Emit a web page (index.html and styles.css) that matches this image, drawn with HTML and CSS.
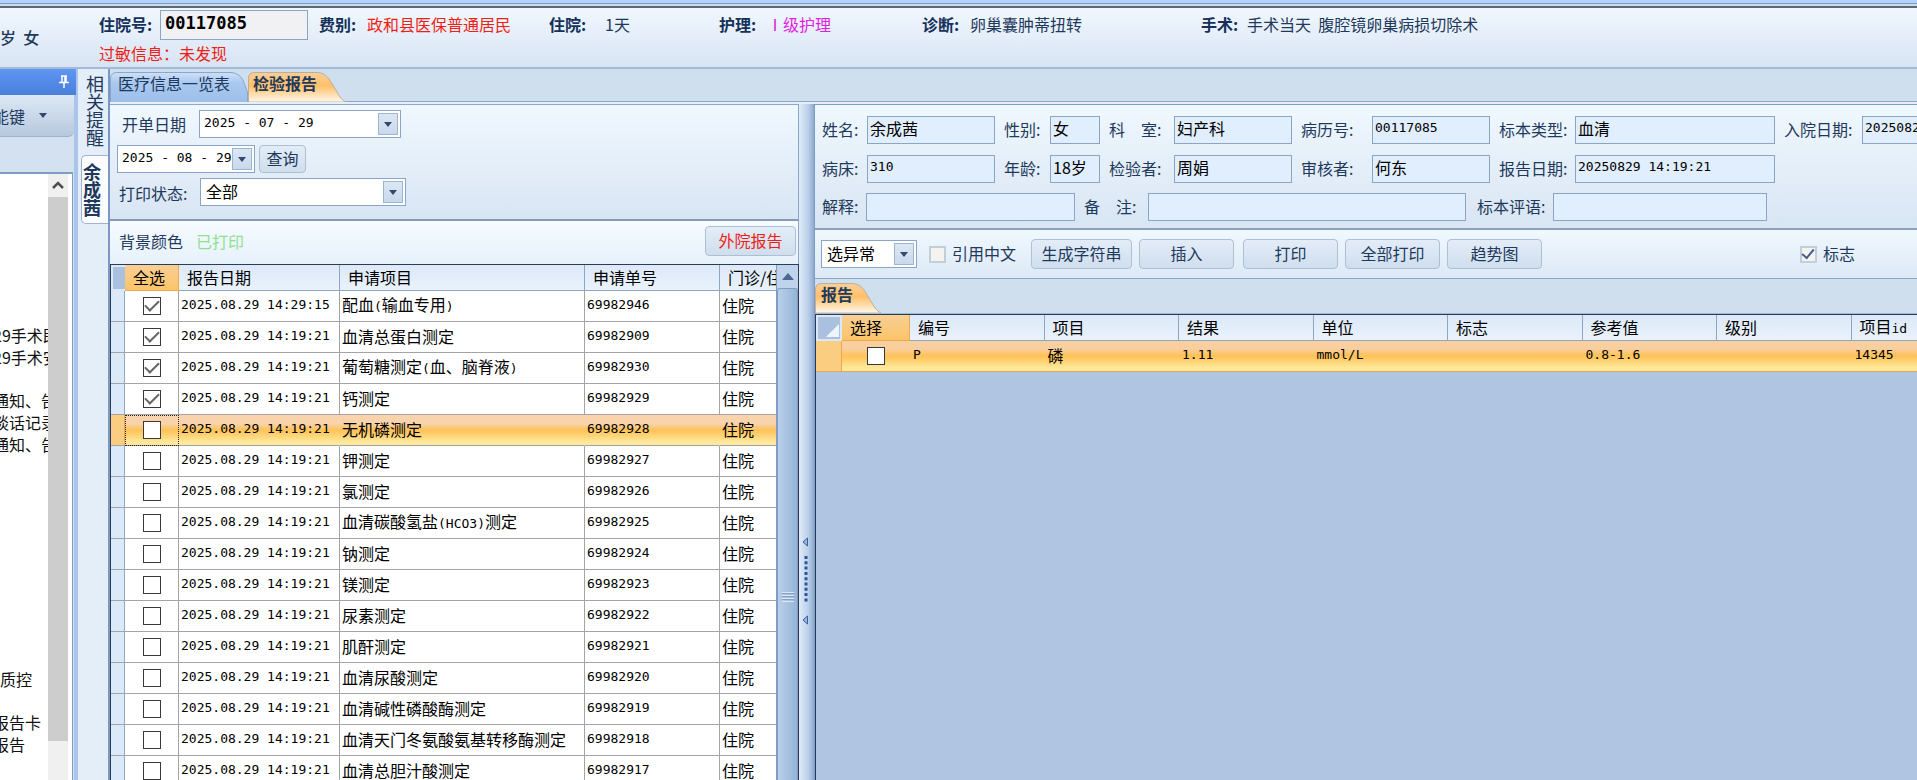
FILE: index.html
```html
<!DOCTYPE html>
<html lang="zh-CN">
<head>
<meta charset="utf-8">
<title>检验报告</title>
<link rel="stylesheet" href="styles.css">
</head>
<body>
<div class="window-edge"></div>
<header class="patient">
  <div class="patient-basic">岁&nbsp; 女</div>
  <div class="patient-info">
    <div class="patient-row">
      <div class="fact fact-id"><label for="admission">住院号:</label><input id="admission" type="text" value="00117085"></div>
      <div class="fact fact-fee"><b>费别:</b><span class="red">政和县医保普通居民</span></div>
      <div class="fact fact-stay"><b>住院:</b><span class="days">1天</span></div>
      <div class="fact fact-care"><b>护理:</b><span class="magenta">Ⅰ级护理</span></div>
      <div class="fact fact-diagnosis"><b>诊断:</b><span>卵巢囊肿蒂扭转</span></div>
      <div class="fact fact-surgery"><b>手术:</b><span>手术当天&nbsp; 腹腔镜卵巢病损切除术</span></div>
    </div>
    <div class="allergy">过敏信息：未发现</div>
  </div>
</header>

<div class="workspace">
  <aside class="side">
    <div class="side-title">
      <svg class="pin" viewBox="0 0 10 13"><path d="M2 1h6M3 1v6M7 1v6M6 1v6M0 7.500h10M5 8v5" fill="none" stroke="#fff" stroke-width="1.500"/></svg>
    </div>
    <div class="side-tools"><button type="button">能键</button><svg class="caret" viewBox="0 0 8 5"><path d="M0 0h8L4 5z"/></svg></div>
    <div class="side-strip"></div>
    <div class="tree">
      <ul>
        <li>29手术即</li>
        <li>29手术安</li>
        <li class="blank"></li>
        <li>通知、告</li>
        <li>谈话记录</li>
        <li>通知、告</li>
        <li class="space"></li>
        <li class="flush">质控</li>
        <li class="blank"></li>
        <li>报告卡</li>
        <li>报告</li>
      </ul>
      <div class="tree-scroll">
        <button type="button" aria-label="向上"><svg viewBox="0 0 12 9"><path d="M1 7l5-5 5 5" fill="none" stroke="#505050" stroke-width="2.500"/></svg></button>
        <div class="tree-thumb"></div>
      </div>
    </div>
  </aside>

  <nav class="vtabs">
    <button type="button" class="vtab">相关提醒</button>
    <button type="button" class="vtab vtab-on">余成茜</button>
  </nav>

  <main class="main">
    <div class="tabs">
      <button type="button" class="tab tab-list">
        <svg viewBox="0 0 138 30" preserveAspectRatio="none"><defs><linearGradient id="blue" x1="0" y1="0" x2="0" y2="1"><stop offset="0" stop-color="#cfe0f6"/><stop offset=".35" stop-color="#a9c8f0"/><stop offset="1" stop-color="#9dbfe9"/></linearGradient></defs><path d="M.5 30V7Q.5.5 7 .5H121Q129 1 133 8L137.500 20V30" fill="url(#blue)" stroke="#8aa6cd"/></svg>
        <span>医疗信息一览表</span>
      </button>
      <button type="button" class="tab tab-lab">
        <svg viewBox="0 0 98 30" preserveAspectRatio="none"><defs><linearGradient id="orange" x1="0" y1="0" x2="0" y2="1"><stop offset="0" stop-color="#f9cf9a"/><stop offset=".45" stop-color="#ffc069"/><stop offset="1" stop-color="#fff8ec"/></linearGradient></defs><path d="M.5 30V6Q.5.500 7 .500H70Q78 1 83 10L92 25Q95 29 98 30z" fill="url(#orange)" stroke="#b5a58f" stroke-width=".8"/></svg>
        <span>检验报告</span>
      </button>
    </div>

    <div class="panes">
      <section class="orders">
        <form class="filters">
          <div class="filter-row filter-from">
            <label for="from">开单日期</label>
            <div class="combo combo-from"><input id="from" type="text" value="2025 - 07 - 29"><button type="button" aria-label="选择日期"><svg class="caret" viewBox="0 0 8 5"><path d="M0 0h8L4 5z"/></svg></button></div>
          </div>
          <div class="filter-row filter-to">
            <div class="combo combo-to"><input type="text" aria-label="结束日期" value="2025 - 08 - 29"><button type="button" aria-label="选择日期"><svg class="caret" viewBox="0 0 8 5"><path d="M0 0h8L4 5z"/></svg></button></div>
            <button type="button" class="btn btn-query">查询</button>
          </div>
          <div class="filter-row filter-print">
            <label for="printed">打印状态:</label>
            <div class="combo combo-print"><select id="printed"><option>全部</option></select><span class="drop"><svg class="caret" viewBox="0 0 8 5"><path d="M0 0h8L4 5z"/></svg></span></div>
          </div>
        </form>
        <div class="legend">
          <span>背景颜色</span><span class="green">已打印</span>
          <button type="button" class="btn btn-outside">外院报告</button>
        </div>
        <div class="orders-grid">
          <table class="order-table">
            <colgroup><col class="c-mark"><col class="c-all"><col class="c-date"><col class="c-item"><col class="c-no"><col class="c-kind"></colgroup>
            <thead><tr><th class="mark"></th><th class="hot">全选</th><th>报告日期</th><th>申请项目</th><th>申请单号</th><th>门诊/住院</th></tr></thead>
            <tbody>
              <tr><td></td><td><input type="checkbox" checked aria-label="选择"></td><td class="num">2025.08.29 14:29:15</td><td>配血<i>(</i>输血专用<i>)</i></td><td class="num">69982946</td><td>住院</td></tr>
              <tr><td></td><td><input type="checkbox" checked aria-label="选择"></td><td class="num">2025.08.29 14:19:21</td><td>血清总蛋白测定</td><td class="num">69982909</td><td>住院</td></tr>
              <tr><td></td><td><input type="checkbox" checked aria-label="选择"></td><td class="num">2025.08.29 14:19:21</td><td>葡萄糖测定<i>(</i>血、脑脊液<i>)</i></td><td class="num">69982930</td><td>住院</td></tr>
              <tr><td></td><td><input type="checkbox" checked aria-label="选择"></td><td class="num">2025.08.29 14:19:21</td><td>钙测定</td><td class="num">69982929</td><td>住院</td></tr>
              <tr class="current"><td></td><td><input type="checkbox" aria-label="选择"></td><td class="num">2025.08.29 14:19:21</td><td>无机磷测定</td><td class="num">69982928</td><td>住院</td></tr>
              <tr><td></td><td><input type="checkbox" aria-label="选择"></td><td class="num">2025.08.29 14:19:21</td><td>钾测定</td><td class="num">69982927</td><td>住院</td></tr>
              <tr><td></td><td><input type="checkbox" aria-label="选择"></td><td class="num">2025.08.29 14:19:21</td><td>氯测定</td><td class="num">69982926</td><td>住院</td></tr>
              <tr><td></td><td><input type="checkbox" aria-label="选择"></td><td class="num">2025.08.29 14:19:21</td><td>血清碳酸氢盐<i>(HCO3)</i>测定</td><td class="num">69982925</td><td>住院</td></tr>
              <tr><td></td><td><input type="checkbox" aria-label="选择"></td><td class="num">2025.08.29 14:19:21</td><td>钠测定</td><td class="num">69982924</td><td>住院</td></tr>
              <tr><td></td><td><input type="checkbox" aria-label="选择"></td><td class="num">2025.08.29 14:19:21</td><td>镁测定</td><td class="num">69982923</td><td>住院</td></tr>
              <tr><td></td><td><input type="checkbox" aria-label="选择"></td><td class="num">2025.08.29 14:19:21</td><td>尿素测定</td><td class="num">69982922</td><td>住院</td></tr>
              <tr><td></td><td><input type="checkbox" aria-label="选择"></td><td class="num">2025.08.29 14:19:21</td><td>肌酐测定</td><td class="num">69982921</td><td>住院</td></tr>
              <tr><td></td><td><input type="checkbox" aria-label="选择"></td><td class="num">2025.08.29 14:19:21</td><td>血清尿酸测定</td><td class="num">69982920</td><td>住院</td></tr>
              <tr><td></td><td><input type="checkbox" aria-label="选择"></td><td class="num">2025.08.29 14:19:21</td><td>血清碱性磷酸酶测定</td><td class="num">69982919</td><td>住院</td></tr>
              <tr><td></td><td><input type="checkbox" aria-label="选择"></td><td class="num">2025.08.29 14:19:21</td><td>血清天门冬氨酸氨基转移酶测定</td><td class="num">69982918</td><td>住院</td></tr>
              <tr><td></td><td><input type="checkbox" aria-label="选择"></td><td class="num">2025.08.29 14:19:21</td><td>血清总胆汁酸测定</td><td class="num">69982917</td><td>住院</td></tr>
            </tbody>
          </table>
          <div class="grid-scroll">
            <button type="button" aria-label="向上"><svg viewBox="0 0 12 7"><path d="M0 7h12L6 0z" fill="#4b6791"/></svg></button>
            <div class="grid-thumb"><span></span></div>
          </div>
        </div>
      </section>

      <div class="splitter">
        <svg viewBox="0 0 6 88"><path d="M5.500 1v8L1 5zM5.500 79v8L1 83z" fill="#9db8de" stroke="#3b5f9c"/><path d="M4 19v47" stroke="#2c5599" stroke-width="3" stroke-dasharray="3 2.300" fill="none"/></svg>
      </div>

      <section class="report">
        <form class="details">
          <div class="details-grid">
            <label for="d1">姓名:</label><input id="d1" type="text" value="余成茜">
            <label for="d2">性别:</label><input id="d2" type="text" value="女">
            <label for="d3">科　室:</label><input id="d3" type="text" value="妇产科">
            <label for="d4">病历号:</label><input id="d4" class="num" type="text" value="00117085">
            <label for="d5">标本类型:</label><input id="d5" type="text" value="血清">
            <label for="d6">入院日期:</label><input id="d6" class="num" type="text" value="20250828">
            <label for="d7">病床:</label><input id="d7" class="num" type="text" value="310">
            <label for="d8">年龄:</label><input id="d8" type="text" value="18岁">
            <label for="d9">检验者:</label><input id="d9" type="text" value="周娟">
            <label for="d10">审核者:</label><input id="d10" type="text" value="何东">
            <label for="d11">报告日期:</label><input id="d11" class="num" type="text" value="20250829 14:19:21">
          </div>
          <div class="details-notes">
            <label for="n1">解释:</label><input id="n1" type="text">
            <label for="n2">备　注:</label><input id="n2" type="text">
            <label for="n3">标本评语:</label><input id="n3" type="text">
          </div>
        </form>
        <div class="actions">
          <div class="combo combo-pick"><select aria-label="选择方式"><option>选异常</option></select><span class="drop"><svg class="caret" viewBox="0 0 8 5"><path d="M0 0h8L4 5z"/></svg></span></div>
          <label class="soft-check check-chinese"><input type="checkbox">引用中文</label>
          <button type="button" class="btn btn-string">生成字符串</button>
          <button type="button" class="btn">插入</button>
          <button type="button" class="btn btn-print">打印</button>
          <button type="button" class="btn">全部打印</button>
          <button type="button" class="btn">趋势图</button>
          <label class="soft-check check-flag"><input type="checkbox" checked>标志</label>
        </div>
        <div class="report-tabs">
          <button type="button" class="tab tab-report">
            <svg viewBox="0 0 66 30" preserveAspectRatio="none"><path d="M.5 30V6Q.5.500 7 .500H38Q46 1 51 10L60 25Q63 29 66 30z" fill="url(#orange)" stroke="#b5a58f" stroke-width=".8"/></svg>
            <span>报告</span>
          </button>
        </div>
        <div class="result-grid">
          <table class="result-table">
            <colgroup><col class="r-corner"><col class="r-pick"><col span="8"></colgroup>
            <thead><tr><th class="corner"><svg viewBox="0 0 16 16"><path d="M16 1v15H1z" fill="#eef5fc"/></svg></th><th class="hot">选择</th><th>编号</th><th>项目</th><th>结果</th><th>单位</th><th>标志</th><th>参考值</th><th>级别</th><th>项目<i>id</i></th></tr></thead>
            <tbody><tr><td class="row-mark"></td><td class="pick"><input type="checkbox" aria-label="选择"></td><td class="num">P</td><td>磷</td><td class="num">1.11</td><td class="num">mmol/L</td><td></td><td class="num">0.8-1.6</td><td></td><td class="num">14345</td></tr></tbody>
          </table>
        </div>
      </section>
    </div>
  </main>
</div>
</body>
</html>
```

FILE: styles.css
```css
* { box-sizing: border-box; }
body {
  margin: 0;
  height: 100vh;
  overflow: hidden;
  display: flex;
  flex-direction: column;
  font: 16px/20px "Noto Sans CJK SC", sans-serif;
  color: #1e395b;
  background: #cfdfee;
  white-space: nowrap;
}
button, input, select { font: inherit; color: inherit; margin: 0; padding: 0; border: 0; background: none; }
input, select { min-width: 0; }
i, .num, .details .num, .combo input, .fact-id input { font-family: "DejaVu Sans Mono", "Noto Sans CJK SC", monospace; font-style: normal; }
i, .num { font-size: 13px; }
.red { color: #f01e14; }
.magenta { color: #e01ee0; }
.green { color: #8fe08f; }
.caret { width: 8px; height: 5px; fill: #33496b; }

/* Patient header */
.window-edge { flex: none; height: 8px; background: linear-gradient(#b0d4ff 3px, #7f9cc4 3px 4px, #cddcec 4px 6px, #5f6972 6px); }
.patient { flex: none; display: flex; height: 61px; border-bottom: 2px solid #a3bbd6; background: linear-gradient(#f0f7fe, #d8e4f4); }
.patient-basic { width: 99px; padding-top: 19px; font-weight: 500; }
.patient-row { display: flex; height: 35px; }
.fact { display: flex; padding-top: 6px; }
.fact b, .fact label { width: 48px; font-weight: 700; color: #15315a; }
.fact-id { width: 220px; padding-top: 2px; }
.fact-id label { width: 61px; padding-top: 4px; }
.fact-id input { width: 148px; height: 30px; padding: 0 0 5px 4px; border: 1px solid #8ba5c8; background: #f1f1f3; color: #000; font-size: 17px; font-weight: 700; }
.fact-fee { width: 230px; }
.fact-stay { width: 170px; }
.fact-care { width: 203px; }
.fact-diagnosis { width: 279px; }
.fact-surgery b { width: 46px; }
.days { padding-left: 8px; }
.allergy { color: #f01e14; }

.workspace { flex: 1; min-height: 0; display: flex; }

/* Left navigation */
.side { flex: none; width: 78px; display: flex; flex-direction: column; background: #d3e2f3; border-right: 4px solid #a9c6ea; }
.side-title { width: 76px; height: 26px; background: linear-gradient(#5f96f3, #4a7fdc); padding: 6px 0 0 59px; }
.pin { display: block; width: 10px; height: 13px; }
.side-tools { display: flex; align-items: center; gap: 14px; height: 42px; background: linear-gradient(#dde8f5, #b7c8de); border-bottom: 1px solid #9db2cd; border-radius: 0 0 6px 0; }
.side-tools button { margin-left: -7px; }
.side-strip { height: 35px; background: #d3e1f1; }
.tree { flex: 1; min-height: 0; display: flex; width: 73px; border: solid #7f9cc4; border-width: 2px 1px 0 0; background: #fff; }
.tree ul { flex: 1; min-width: 0; margin: 0; padding: 150px 0 0; list-style: none; overflow: hidden; color: #111; line-height: 22px; }
.tree li { height: 22px; margin-left: -7px; }
.tree .blank { height: 21px; }
.tree .flush { margin-left: 0; }
.tree .space { height: 213px; }
.tree-scroll { width: 24px; padding-right: 4px; background: linear-gradient(90deg, #f0f0f0 20px, #fff 20px); }
.tree-scroll button { display: grid; place-items: center; width: 20px; height: 23px; }
.tree-scroll svg { width: 12px; height: 9px; }
.tree-thumb { height: 544px; background: #cdcdcd; }

/* Vertical tabs */
.vtabs { flex: none; width: 32px; background: #e4eef9; border-right: 2px solid #7c97c2; display: flex; flex-direction: column; align-items: flex-end; }
.vtab { width: 27px; height: 86px; padding: 6px 4px 0 5px; writing-mode: vertical-rl; text-orientation: upright; font-size: 18px; line-height: 18px; text-align: left; }
.vtab-on { height: 69px; padding: 7px 7px 0 1px; border: 1px solid #9fb4d2; border-right: 0; border-radius: 5px 0 0 5px; background: #fafcff; font-weight: 700; }

.main { flex: 1; min-width: 0; display: flex; flex-direction: column; }
.tabs { flex: none; display: flex; height: 33px; padding-top: 3px; border-bottom: 1px solid #8ea6c8; }
.tab { position: relative; height: 30px; text-align: left; }
.tab svg { position: absolute; inset: 0; width: 100%; height: 100%; }
.tab span { position: relative; }
.tab-list { width: 138px; padding: 0 0 8px 8px; }
.tab-lab { width: 98px; padding: 0 0 8px 5px; font-weight: 700; }
.panes { flex: 1; min-height: 0; display: flex; border-top: 2px solid #e6eff9; }

/* Orders pane */
.orders { flex: none; width: 689px; display: flex; flex-direction: column; border-top: 1px solid #8ea6c8; background: #eff7fe; }
.filters { flex: none; height: 116px; padding-top: 5px; border-right: 1px solid #8ea6c8; border-bottom: 2px solid #8797b5; background: linear-gradient(#f0f8ff, #d8e5f3); }
.filter-row { display: flex; align-items: center; height: 28px; }
.filter-from { padding-left: 12px; }
.filter-from label { width: 77px; }
.filter-to { padding-left: 7px; gap: 4px; margin-top: 7px; }
.filter-print { padding-left: 9px; margin-top: 5px; }
.filter-print label { width: 81px; padding-top: 2px; }
.combo { display: flex; height: 28px; padding: 2px; border: 1px solid #8ba5c8; background: #fff; color: #000; }
.combo input, .combo select { flex: 1; padding: 0 0 3px 3px; font-size: 16px; appearance: none; }
.combo input { padding-left: 2px; font-size: 13px; }
.combo button, .drop { flex: none; display: grid; place-items: center; width: 20px; border: 1px solid #9fb4d2; background: linear-gradient(#dbe7f5, #c9d9ec); }
.combo-from { width: 202px; }
.combo-to { width: 138px; }
.combo-print { width: 206px; }
.btn { padding-bottom: 2px; border: 1px solid #aebfd4; border-radius: 4px; background: linear-gradient(#e3edf8, #cfdeed); }
.btn-query { width: 47px; height: 28px; }
.legend { flex: none; display: flex; align-items: center; height: 43px; padding: 0 2px 4px 9px; border-right: 1px solid #8ea6c8; background: linear-gradient(#f6fbff, #e6f1fb); }
.green { margin-left: 13px; }
.btn-outside { width: 91px; height: 30px; margin-left: auto; color: #f01e14; }
.orders-grid { flex: 1; min-height: 0; display: flex; border: solid #2c3c55; border-width: 1px 1px 0 1px; overflow: hidden; }

table { table-layout: fixed; border-collapse: separate; border-spacing: 0; color: #000; }
th { height: 26px; padding: 0 0 1px 8px; font-weight: 400; text-align: left; border-right: 1px solid #8ea6c8; border-bottom: 1px solid #8ea6c8; background: linear-gradient(#dde9f8, #e9f2fc); overflow: hidden; }
th.hot { background: linear-gradient(#f9cf95, #fcc468); border-color: #f0a850; }
.order-table { flex: none; width: 665px; }
.c-mark { width: 14px; }
.c-all { width: 54px; }
.c-date { width: 161px; }
.c-item { width: 245px; }
.c-no { width: 135px; }
.c-kind { width: 56px; }
.order-table .mark { padding: 0; background: #a9c0df; border: 2px solid #dce8f6; border-right: 0; }
.order-table td { height: 31px; padding: 0 0 2px 2px; border-right: 1px solid #a3a3a8; border-bottom: 1px solid #a3a3a8; background: #fff; overflow: hidden; }
.order-table td:first-child { background: #dbe9f8; border-right-color: #8ea6c8; }
.order-table td:nth-child(2) { padding: 0 0 3px; text-align: center; }
.order-table td:last-child, .order-table th:last-child { border-right: 0; }
.order-table .current td { background: linear-gradient(#f8d3ab 30%, #ffc257 50%, #fee89b 90%); border-right-color: transparent; }
.order-table .current td:first-child { background: #fbcd80; border-right-color: #f0a850; }
.order-table .current td:nth-child(2) { outline: 1px dotted #222; outline-offset: -1px; }
td input[type="checkbox"] { appearance: none; display: inline-grid; place-items: center; width: 18px; height: 18px; border: 1px solid #3a3a3a; background: #fff; vertical-align: middle; }
td input:checked::after { content: ""; width: 12px; height: 6px; margin-bottom: 4px; border: solid #666; border-width: 0 0 2px 2px; transform: rotate(-45deg); }

.grid-scroll { flex: 1; height: 100%; display: flex; flex-direction: column; overflow: hidden; background: #a9c0df; border-left: 1px solid #7f9cc4; }
.grid-scroll button { flex: none; display: grid; place-items: center; height: 23px; background: #bfd3ec; }
.grid-scroll svg { width: 12px; height: 7px; }
.grid-thumb { flex: none; height: 618px; display: grid; place-items: center; border: 1px solid #7f9cc4; border-radius: 3px; background: linear-gradient(90deg, #b9cfe9, #96b4d8); }
.grid-thumb span { width: 12px; height: 10px; background: repeating-linear-gradient(#dce8f6 0 1px, #86a1c6 1px 2px, transparent 2px 3px); }

.splitter { flex: none; width: 15px; display: grid; place-items: center; background: linear-gradient(90deg, #dfebf8, #bcd0ea 60%, #8eaad2); }
.splitter svg { width: 6px; height: 88px; margin: 278px 3px 0 0; }

/* Report pane */
.report { flex: 1; min-width: 0; display: flex; flex-direction: column; border: solid #7f9cc4; border-width: 1px 0 0 1px; background: #d3e2f1; }
.details { flex: none; height: 125px; padding: 11px 0 0 7px; overflow: hidden; border-bottom: 2px solid #8ba0bd; background: linear-gradient(#f0f8ff, #d8e5f3); }
.details-grid { display: grid; grid-template-columns: 45px 128px 55px 50px 74px 118px 80px 118px 85px 200px 87px 200px; row-gap: 11px; }
.details-grid label, .details-notes label { padding: 3px 0 0 9px; line-height: 20px; }
.details-grid label:first-child, .details-grid label:nth-child(13), .details-notes label:first-child { padding-left: 0; }
.details input { height: 28px; padding: 0 0 5px 2px; border: 1px solid #8ba5c8; background: #e0eefd; color: #000; }
.details-notes { display: flex; margin-top: 10px; }
.details-notes label:first-child { width: 44px; }
.details-notes label:nth-child(3) { width: 73px; }
.details-notes label:nth-child(5) { width: 87px; padding-left: 11px; }
#n1 { width: 209px; }
#n2 { width: 318px; }
#n3 { width: 214px; }

.actions { flex: none; display: flex; align-items: center; height: 49px; padding: 0 62px 0 6px; gap: 7px; border-bottom: 1px solid #8ea6c8; background: linear-gradient(#f0f8ff, #dce9f5); }
.combo-pick { width: 96px; }
.soft-check { display: flex; align-items: center; gap: 6px; padding-bottom: 2px; }
.soft-check input { appearance: none; display: grid; place-items: center; width: 17px; height: 17px; margin-top: 3px; border: 2px solid #c3ced9; background: #f3f3f0; }
.soft-check input:checked::after { content: ""; width: 10px; height: 5px; margin-bottom: 4px; border: solid #44618c; border-width: 0 0 2px 2px; transform: rotate(-50deg); }
.check-chinese { margin: 0 8px 0 5px; }
.check-flag { margin-left: auto; }
.actions .btn { width: 95px; height: 30px; }
.actions .btn-string { width: 101px; }
.actions .btn-print { margin-left: 2px; }
.report-tabs { flex: none; height: 35px; padding-top: 4px; border-bottom: 1px solid #9fb9d9; background: #cfdfee; }
.tab-report { width: 66px; padding: 0 0 8px 6px; font-weight: 700; }
.result-grid { flex: 1; min-height: 0; overflow: hidden; border: solid #2c3c55; border-width: 1px 0 0 1px; background: #b0c5e1; }
.result-table { width: 1170px; }
.r-corner { width: 26px; }
.r-pick { width: 68px; }
.result-table th.corner { padding: 4px 0 0 7px; line-height: 0; border: 2px solid #dce8f6; background: #a9c0df; }
.corner svg { width: 14px; height: 14px; }
.result-table td { height: 31px; padding: 0 0 2px 3px; border-bottom: 1px solid #e6a84c; background: linear-gradient(#f9cfa0 25%, #ffc257 50%, #fee89b 90%); }
.result-table .row-mark { border-right: 1px solid #f0a850; background: #fbcd80; }
.result-table .pick { padding: 0 0 3px; text-align: center; }
```
